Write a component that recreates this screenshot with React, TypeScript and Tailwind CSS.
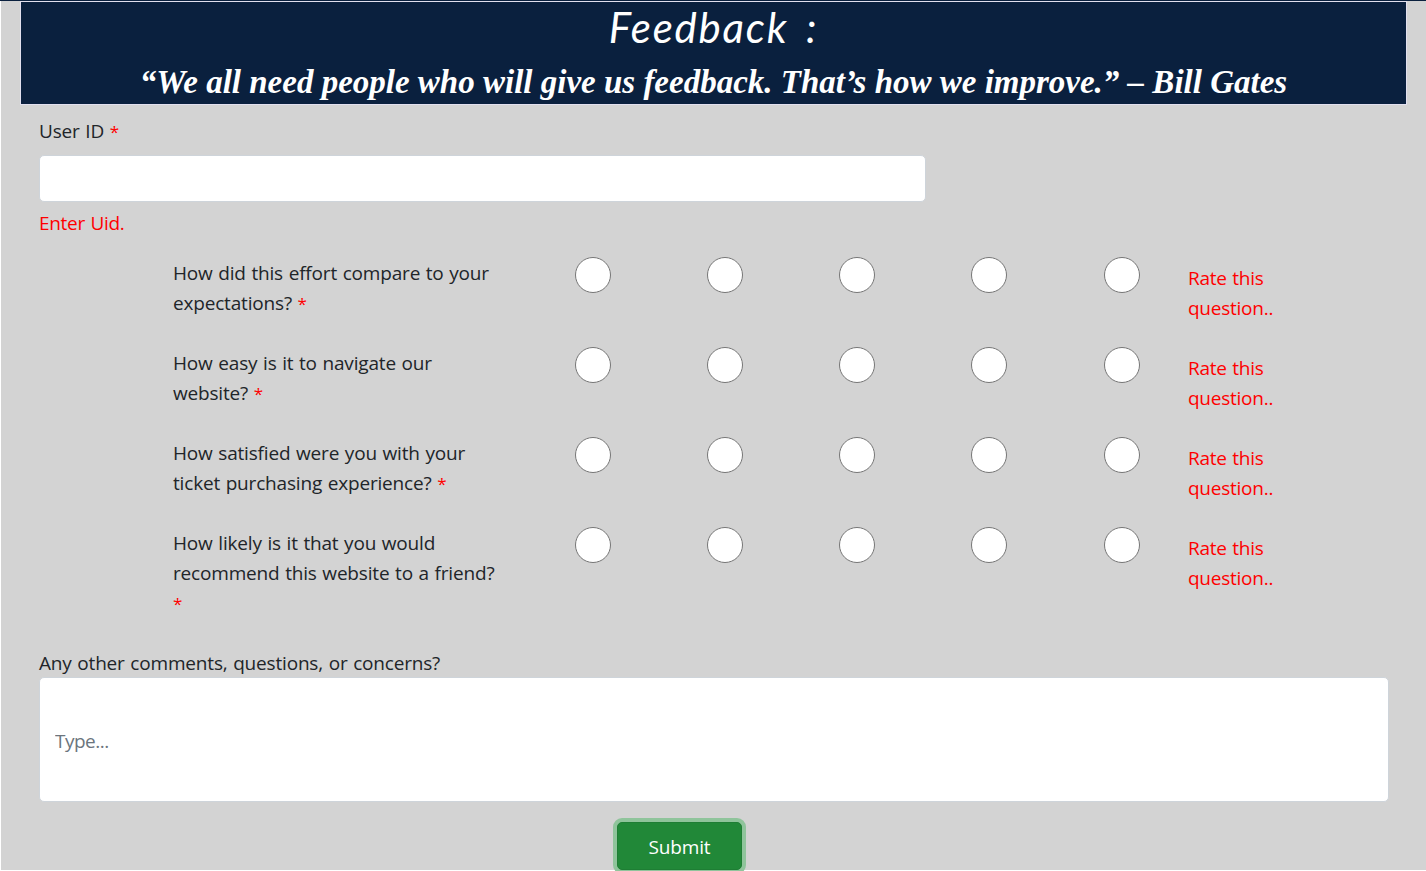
const questions = [
  ['How did this effort compare to your', 'expectations?'],
  ['How easy is it to navigate our', 'website?'],
  ['How satisfied were you with your', 'ticket purchasing experience?'],
  ['How likely is it that you would', 'recommend this website to a friend?'],
];

const ratings = [1, 2, 3, 4, 5];

function Required() {
  return <span className="text-[17px] text-[#ff0000]">*</span>;
}

function QuestionRow({ index, lines }: { index: number; lines: string[] }) {
  const last = index === questions.length - 1;
  return (
    <div className={last ? 'flex h-[120px] items-start' : 'flex h-[90px] items-start'}>
      <div className="w-[402px] shrink-0 whitespace-nowrap pt-px">
        {lines[0]}
        <br />
        {lines[1]} {last && <br />}
        <Required />
      </div>
      <div className="flex w-[613px] shrink-0 gap-[96.15px]">
        {ratings.map((r) => (
          <input
            key={r}
            type="radio"
            name={`question-${index}`}
            value={r}
            className="size-9 shrink-0 appearance-none rounded-full border border-[#767676] bg-white"
          />
        ))}
      </div>
      <div className="w-[90px] pt-1.5 tracking-[-0.25px] text-[#ff0000]">
        Rate this
        <br />
        question..
      </div>
    </div>
  );
}

export default function App() {
  return (
    <div className="h-[871px] w-[1426px] overflow-hidden bg-white font-['Open_Sans','Noto_Sans',sans-serif] text-[19px] leading-[30px] tracking-[-0.18px] text-[#212529] [word-spacing:0.9px]">
      <div className="h-px bg-[#0a203e]" />
      <main className="ml-px h-[869px] bg-[#d3d3d3]">
        <header className="ml-[19px] h-[104px] w-[1387px] border border-[#e2e0ef] bg-[#0a203e] text-center tracking-normal text-white [word-spacing:0px]">
          <h1 className="h-[52px] whitespace-nowrap font-['Lato',sans-serif] text-[42px] italic leading-[50px] tracking-[1.8px] [word-spacing:6px]">
            Feedback :
          </h1>
          <p className="whitespace-nowrap font-['Liberation_Serif',serif] text-[33px] font-bold italic leading-[56px]">
            “We all need people who will give us feedback. That’s how we improve.” – Bill Gates
          </p>
        </header>
        <form className="flex flex-col pl-[38px] pt-[11px]" onSubmit={(e) => e.preventDefault()}>
          <label htmlFor="uid" className="h-[30px]">
            User ID <Required />
          </label>
          <input
            id="uid"
            className="mt-[9px] h-[47px] w-[887px] rounded-[5px] border border-[#ced4da] bg-white px-[15px] outline-none"
          />
          <div className="mt-1.5 h-[30px] tracking-[-0.3px] text-[#ff0000]">Enter Uid.</div>
          <div className="ml-[134px] mt-[19px] h-[391px]">
            {questions.map((lines, i) => (
              <QuestionRow key={i} index={i} lines={lines} />
            ))}
          </div>
          <label htmlFor="comments" className="h-[29px] leading-[30px]">
            Any other comments, questions, or concerns?
          </label>
          <input
            id="comments"
            placeholder="Type..."
            className="h-[125px] w-[1350px] rounded-[5px] border border-[#ced4da] bg-white px-[15px] pt-0.5 tracking-[-0.5px] outline-none placeholder:text-[#6c757d]"
          />
          <button
            type="submit"
            className="ml-[578px] mt-5 h-12 w-[125px] rounded-[5px] border border-[#1e7e34] bg-[#218838] pt-0.5 text-white ring-4 ring-[#8fc49b]"
          >
            Submit
          </button>
        </form>
      </main>
    </div>
  );
}
